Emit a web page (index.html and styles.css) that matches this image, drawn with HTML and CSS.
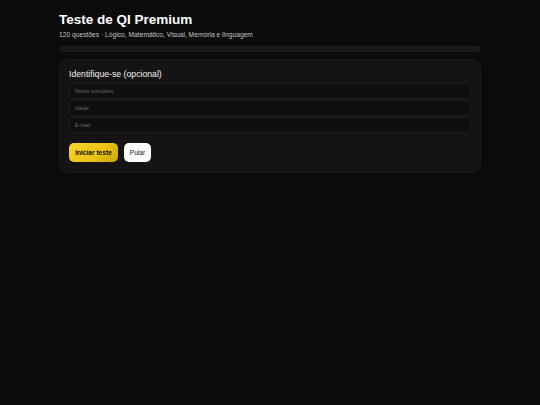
FILE: index.html
```html
<!DOCTYPE html>
<html lang="pt">
<head>
<meta charset="utf-8">
<title>Teste de QI Premium</title>
<link rel="stylesheet" href="styles.css">
</head>
<body>
<main class="wrap">
  <header class="head">
    <h1 class="title">Teste de QI Premium</h1>
    <p class="sub">120 questões · Lógico, Matemático, Visual, Memória e linguagem</p>
  </header>
  <div class="progress"><div class="progress-fill"></div></div>
  <section class="card">
    <h2 class="card-title">Identifique-se (opcional)</h2>
    <div class="fields">
      <input class="field" type="text" placeholder="Nome completo">
      <input class="field" type="text" placeholder="Idade">
      <input class="field" type="text" placeholder="E-mail">
    </div>
    <div class="actions">
      <button class="btn btn-primary">Iniciar teste</button>
      <button class="btn btn-light">Pular</button>
    </div>
  </section>
</main>
</body>
</html>
```

FILE: styles.css
```css
html, body {
  margin: 0;
  padding: 0;
  background: #0b0b0b;
  color: #f2f2f2;
  font-family: "Liberation Sans", Arial, sans-serif;
}
.wrap {
  width: 422px;
  margin: 0 auto;
  padding-top: 12px;
  display: flex;
  flex-direction: column;
}
.head {
  display: flex;
  flex-direction: column;
}
.title {
  margin: 0;
  font-size: 13.5px;
  font-weight: 700;
  line-height: 16px;
  color: #ffffff;
}
.sub {
  margin: 2px 0 0;
  font-size: 6.7px;
  line-height: 10px;
  color: #c4c4c4;
}
.progress {
  margin-top: 6px;
  height: 4px;
  border-radius: 3px;
  background: #181818;
  border: 0.5px solid #1f1f1f;
  overflow: hidden;
}
.progress-fill {
  width: 0;
  height: 100%;
  background: #f2c811;
}
.card {
  margin-top: 7px;
  background: #141414;
  border: 1px solid #1b1b1b;
  border-radius: 10px;
  padding: 8px 9px 10px;
  display: flex;
  flex-direction: column;
}
.card-title {
  margin: 0;
  font-size: 8.7px;
  font-weight: 400;
  line-height: 12px;
  color: #f0f0f0;
}
.fields {
  margin-top: 3px;
  display: flex;
  flex-direction: column;
  gap: 1px;
}
.field {
  box-sizing: border-box;
  height: 16px;
  width: 100%;
  margin: 0;
  padding: 0 5px;
  background: #0f0f0f;
  border: 1px solid #1c1c1c;
  border-radius: 4px;
  color: #ddd;
  font-family: "Liberation Sans", Arial, sans-serif;
  font-size: 5.5px;
  outline: none;
}
.field::placeholder {
  color: #6a6a6a;
}
.actions {
  margin-top: 10px;
  display: flex;
  gap: 6px;
}
.btn {
  height: 19px;
  border: none;
  border-radius: 5px;
  font-family: "Liberation Sans", Arial, sans-serif;
  font-size: 6.6px;
  padding: 0 6px;
  cursor: pointer;
}
.btn-primary {
  width: 49px;
  font-weight: 700;
  color: #151100;
  background: linear-gradient(135deg, #f6d52a 0%, #e9c112 60%, #cfa800 100%);
}
.btn-light {
  width: 27px;
  padding: 0;
  color: #111;
  background: #ffffff;
}
```
